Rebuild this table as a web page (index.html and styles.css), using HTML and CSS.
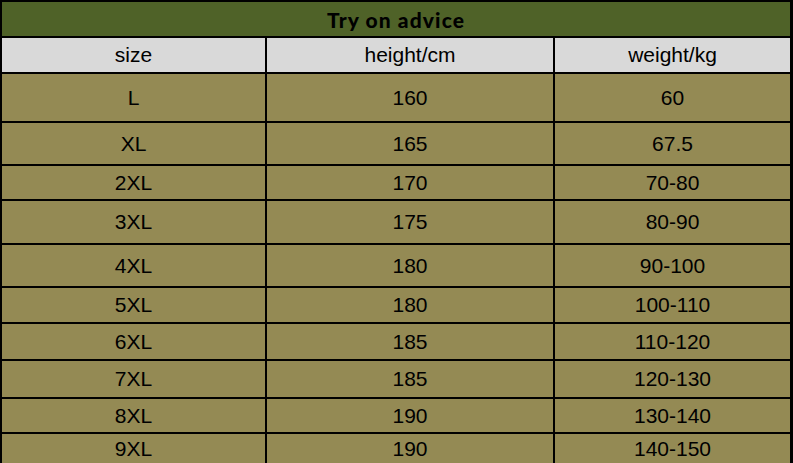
FILE: index.html
```html
<!DOCTYPE html>
<html>
<head>
<meta charset="utf-8">
<link rel="stylesheet" href="styles.css">
</head>
<body>
<div class="chart">
  <div class="title">Try on advice</div>
  <div class="cell head">size</div><div class="cell head">height/cm</div><div class="cell head">weight/kg</div>
  <div class="cell">L</div><div class="cell">160</div><div class="cell">60</div>
  <div class="cell">XL</div><div class="cell">165</div><div class="cell">67.5</div>
  <div class="cell">2XL</div><div class="cell">170</div><div class="cell">70-80</div>
  <div class="cell">3XL</div><div class="cell">175</div><div class="cell">80-90</div>
  <div class="cell">4XL</div><div class="cell">180</div><div class="cell">90-100</div>
  <div class="cell">5XL</div><div class="cell">180</div><div class="cell">100-110</div>
  <div class="cell">6XL</div><div class="cell">185</div><div class="cell">110-120</div>
  <div class="cell">7XL</div><div class="cell">185</div><div class="cell">120-130</div>
  <div class="cell">8XL</div><div class="cell">190</div><div class="cell">130-140</div>
  <div class="cell">9XL</div><div class="cell">190</div><div class="cell">140-150</div>
</div>
</body>
</html>
```
FILE: styles.css
```css
html, body {
  margin: 0;
  padding: 0;
  overflow: hidden;
  background: #000;
}
.chart {
  display: grid;
  grid-template-columns: 263px 286px 235px;
  grid-template-rows: 34px 34px 47px 41px 33px 42px 41px 34px 35px 36px 33px 29px;
  gap: 2px;
  padding: 2px 3px 2px 2px;
  width: 793px;
  box-sizing: border-box;
  background: #000;
}
.title {
  grid-column: 1 / 4;
  background: #4f6228;
  color: #000;
  font-family: "Lato", "DejaVu Sans", sans-serif;
  font-weight: 900;
  font-size: 21px;
  display: flex;
  align-items: center;
  justify-content: center;
  letter-spacing: 1.1px;
  padding-top: 1px;
}
.cell {
  background: #948a54;
  color: #000;
  font-family: "Liberation Sans", Arial, sans-serif;
  font-size: 21px;
  display: flex;
  align-items: center;
  justify-content: center;
}
.cell.head {
  background: #d9d9d9;
}
```
